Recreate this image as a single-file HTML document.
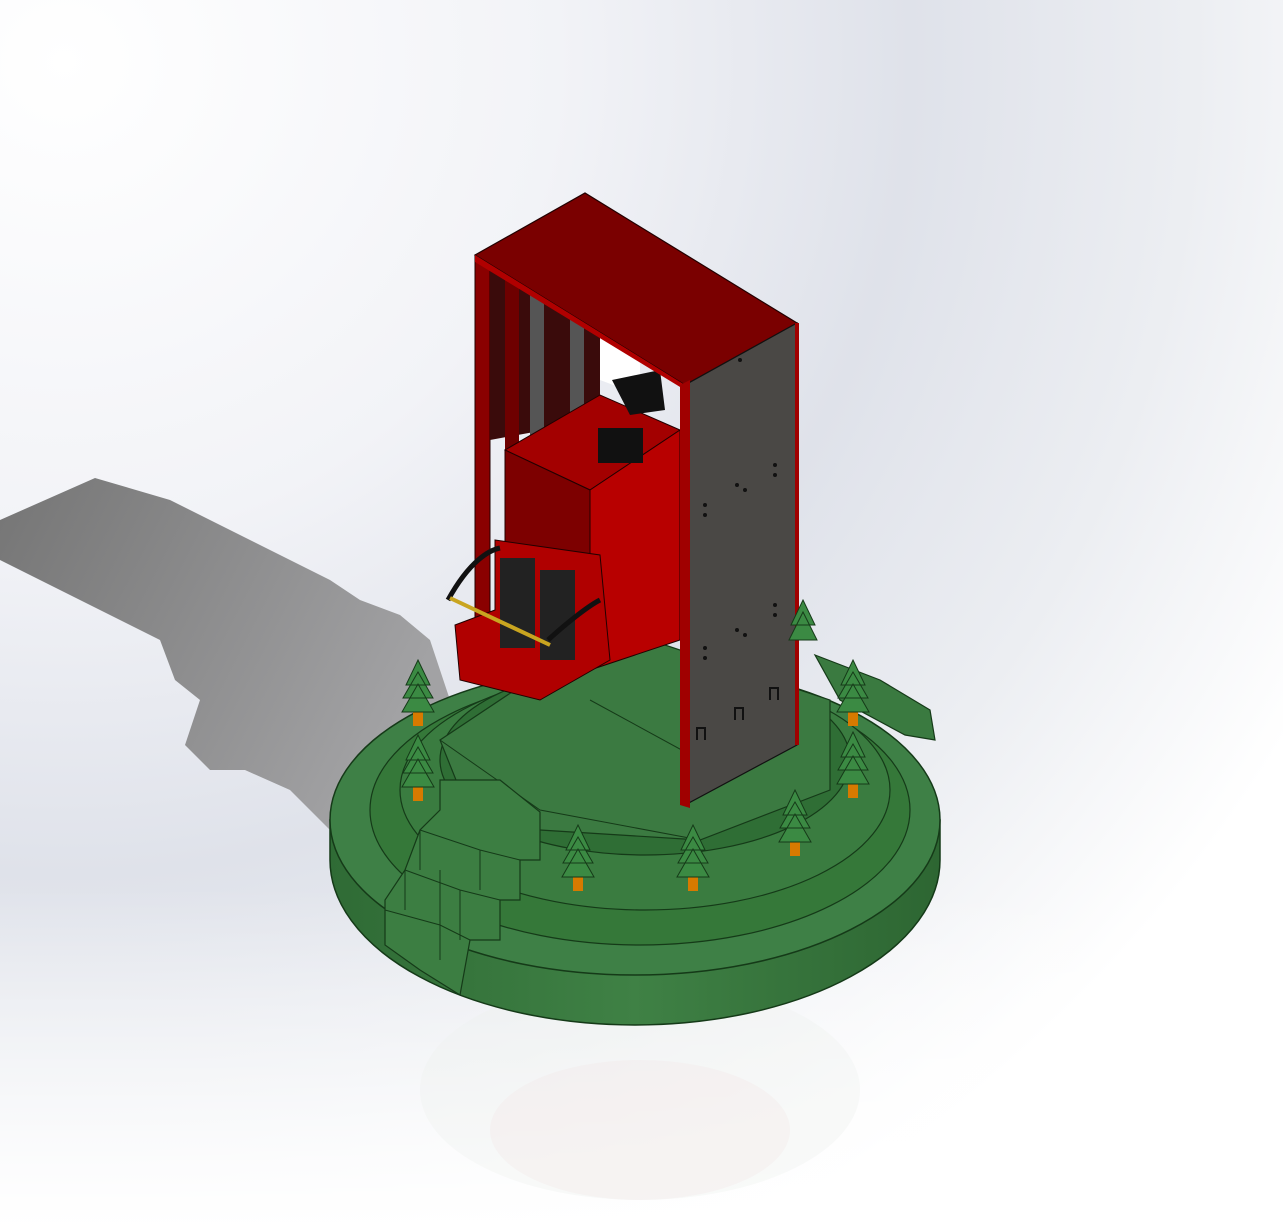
<!DOCTYPE html>
<html><head><meta charset="utf-8"><style>
html,body{margin:0;padding:0;width:1283px;height:1231px;overflow:hidden;background:#fff}
</style></head><body>
<svg width="1283" height="1231" viewBox="0 0 1283 1231" xmlns="http://www.w3.org/2000/svg">
<defs>
<radialGradient id="bg" cx="0.05" cy="0.05" r="1.1">
<stop offset="0" stop-color="#ffffff"/>
<stop offset="0.35" stop-color="#f2f3f7"/>
<stop offset="0.6" stop-color="#dfe2ea"/>
<stop offset="0.8" stop-color="#eceef2"/>
<stop offset="1" stop-color="#ffffff"/>
</radialGradient>
<linearGradient id="fade" x1="0" y1="0" x2="0" y2="1">
<stop offset="0" stop-color="#fff" stop-opacity="0"/>
<stop offset="0.72" stop-color="#fff" stop-opacity="0"/>
<stop offset="1" stop-color="#fff" stop-opacity="1"/>
</linearGradient>
<linearGradient id="shadow" x1="0" y1="0" x2="1" y2="0.4">
<stop offset="0" stop-color="#757575"/>
<stop offset="1" stop-color="#a2a2a4"/>
</linearGradient>
<linearGradient id="side" x1="0" y1="0" x2="1" y2="0">
<stop offset="0" stop-color="#2f6b35"/>
<stop offset="0.5" stop-color="#3f8145"/>
<stop offset="1" stop-color="#2d6632"/>
</linearGradient>
</defs>
<rect width="1283" height="1231" fill="url(#bg)"/>
<rect width="1283" height="1231" fill="url(#fade)"/>
<!-- shadow -->
<path d="M0,520 L95,478 L170,500 L330,580 L360,600 L400,615 L430,640 L450,700 L430,760 L380,800 L330,830 L290,790 L245,770 L210,770 L185,745 L200,700 L175,680 L160,640 L120,620 L80,600 L30,575 L0,560 Z" fill="url(#shadow)"/>
<!-- reflection -->
<ellipse cx="640" cy="1090" rx="220" ry="110" fill="#eef0ee" opacity="0.35"/>
<ellipse cx="640" cy="1130" rx="150" ry="70" fill="#f3e6e6" opacity="0.3"/>
<!-- base -->
<path d="M330,860 A305,165 0 0 0 940,860 L940,820 L330,820 Z" fill="url(#side)" stroke="#153a18" stroke-width="1.5"/>
<ellipse cx="635" cy="820" rx="305" ry="155" fill="#3e8046" stroke="#153a18" stroke-width="1.5"/>
<ellipse cx="640" cy="810" rx="270" ry="135" fill="#357839" stroke="#153a18" stroke-width="1.2"/>
<ellipse cx="645" cy="790" rx="245" ry="120" fill="#3a7c40" stroke="#153a18" stroke-width="1.2"/>
<ellipse cx="645" cy="760" rx="205" ry="95" fill="#2f6e35" stroke="#153a18" stroke-width="1.2"/>
<!-- platform -->
<path d="M440,740 L560,660 L650,640 L830,700 L830,790 L700,840 L540,830 L460,790 Z" fill="#3b7a41" stroke="#153a18" stroke-width="1.2"/>
<path d="M440,740 L540,810 L700,840 M590,700 L700,760" stroke="#153a18" stroke-width="1" fill="none"/>
<!-- protrusion right -->
<path d="M815,655 L880,680 L930,710 L935,740 L905,735 L840,700 Z" fill="#3a7a40" stroke="#153a18" stroke-width="1.2"/>
<!-- stairs -->
<path d="M440,780 L500,780 L540,812 L540,860 L520,860 L520,900 L500,900 L500,940 L470,940 L460,995 L420,970 L385,945 L385,900 L405,870 L420,830 L440,810 Z" fill="#3c7e42" stroke="#153a18" stroke-width="1.2"/>
<path d="M420,830 L480,850 L520,860 M405,870 L460,890 L500,900 M385,910 L440,925 L470,940 M420,830 L420,870 M405,870 L405,910 M440,870 L440,960 M460,890 L460,940 M480,850 L480,890" stroke="#153a18" stroke-width="1" fill="none"/>
<!-- tower: left frame -->
<path d="M475,255 L490,250 L490,650 L475,655 Z" fill="#8a0000" stroke="#200" stroke-width="1"/>
<path d="M490,260 L600,330 L600,420 L490,440 Z" fill="#3a0b0b"/>
<rect x="505" y="275" width="14" height="330" fill="#6e0000"/>
<rect x="530" y="290" width="14" height="150" fill="#555"/>
<rect x="570" y="305" width="14" height="120" fill="#555"/>
<path d="M600,330 L640,345 L640,395 L600,380 Z" fill="#fff"/>
<!-- red box -->
<path d="M505,450 L600,395 L680,430 L590,490 Z" fill="#a30000" stroke="#200"/>
<path d="M505,450 L590,490 L590,670 L505,620 Z" fill="#7d0000" stroke="#200"/>
<path d="M590,490 L680,430 L680,640 L590,670 Z" fill="#b80000" stroke="#200"/>
<path d="M612,380 L660,370 L665,410 L630,415 Z" fill="#111"/>
<rect x="598" y="428" width="45" height="35" fill="#111"/>
<!-- seat -->
<path d="M495,540 L600,555 L610,660 L540,700 L460,680 L455,625 L495,610 Z" fill="#b00000" stroke="#200"/>
<rect x="500" y="558" width="35" height="90" fill="#222"/>
<rect x="540" y="570" width="35" height="90" fill="#222"/>
<path d="M448,600 C470,560 490,550 500,548 M548,640 C570,620 590,605 600,600" stroke="#111" stroke-width="5" fill="none"/>
<path d="M450,598 L550,645" stroke="#c9a520" stroke-width="4"/>
<!-- top -->
<path d="M475,255 L585,193 L797,323 L685,385 Z" fill="#7a0000" stroke="#200" stroke-width="1.2"/>
<path d="M475,255 L685,385 L685,390 L475,262 Z" fill="#b00000"/>
<!-- gray panel -->
<path d="M685,385 L797,323 L797,745 L685,805 Z" fill="#4a4845" stroke="#111" stroke-width="1.2"/>
<path d="M680,385 L690,380 L690,808 L680,805 Z" fill="#a00000"/>
<path d="M797,323 L797,745" stroke="#a00000" stroke-width="4"/>
<g fill="#111">
<circle cx="740" cy="360" r="2"/><circle cx="775" cy="465" r="2"/><circle cx="775" cy="475" r="2"/><circle cx="737" cy="485" r="2"/><circle cx="745" cy="490" r="2"/><circle cx="705" cy="505" r="2"/><circle cx="705" cy="515" r="2"/><circle cx="775" cy="605" r="2"/><circle cx="775" cy="615" r="2"/><circle cx="737" cy="630" r="2"/><circle cx="745" cy="635" r="2"/><circle cx="705" cy="648" r="2"/><circle cx="705" cy="658" r="2"/>
</g>
<g stroke="#111" stroke-width="2" fill="none">
<path d="M770,700 v-12 h8 v12 M735,720 v-12 h8 v12 M697,740 v-12 h8 v12"/>
</g>
<!-- trees -->
<g>
<g transform="translate(418,690)"><rect x="-5" y="20" width="10" height="16" fill="#d77a00"/><path d="M0,-30 L12,-5 L-12,-5 Z M0,-18 L15,8 L-15,8 Z M0,-6 L16,22 L-16,22 Z" fill="#3b8a43" stroke="#153a18"/></g>
<g transform="translate(418,765)"><rect x="-5" y="20" width="10" height="16" fill="#d77a00"/><path d="M0,-30 L12,-5 L-12,-5 Z M0,-18 L15,8 L-15,8 Z M0,-6 L16,22 L-16,22 Z" fill="#3b8a43" stroke="#153a18"/></g>
<g transform="translate(578,855)"><rect x="-5" y="20" width="10" height="16" fill="#d77a00"/><path d="M0,-30 L12,-5 L-12,-5 Z M0,-18 L15,8 L-15,8 Z M0,-6 L16,22 L-16,22 Z" fill="#3b8a43" stroke="#153a18"/></g>
<g transform="translate(693,855)"><rect x="-5" y="20" width="10" height="16" fill="#d77a00"/><path d="M0,-30 L12,-5 L-12,-5 Z M0,-18 L15,8 L-15,8 Z M0,-6 L16,22 L-16,22 Z" fill="#3b8a43" stroke="#153a18"/></g>
<g transform="translate(795,820)"><rect x="-5" y="20" width="10" height="16" fill="#d77a00"/><path d="M0,-30 L12,-5 L-12,-5 Z M0,-18 L15,8 L-15,8 Z M0,-6 L16,22 L-16,22 Z" fill="#3b8a43" stroke="#153a18"/></g>
<g transform="translate(853,690)"><rect x="-5" y="20" width="10" height="16" fill="#d77a00"/><path d="M0,-30 L12,-5 L-12,-5 Z M0,-18 L15,8 L-15,8 Z M0,-6 L16,22 L-16,22 Z" fill="#3b8a43" stroke="#153a18"/></g>
<g transform="translate(853,762)"><rect x="-5" y="20" width="10" height="16" fill="#d77a00"/><path d="M0,-30 L12,-5 L-12,-5 Z M0,-18 L15,8 L-15,8 Z M0,-6 L16,22 L-16,22 Z" fill="#3b8a43" stroke="#153a18"/></g>
<g transform="translate(803,625)"><path d="M0,-25 L12,0 L-12,0 Z M0,-13 L14,15 L-14,15 Z" fill="#3b8a43" stroke="#153a18"/></g>
</g>
</svg>
</body></html>
